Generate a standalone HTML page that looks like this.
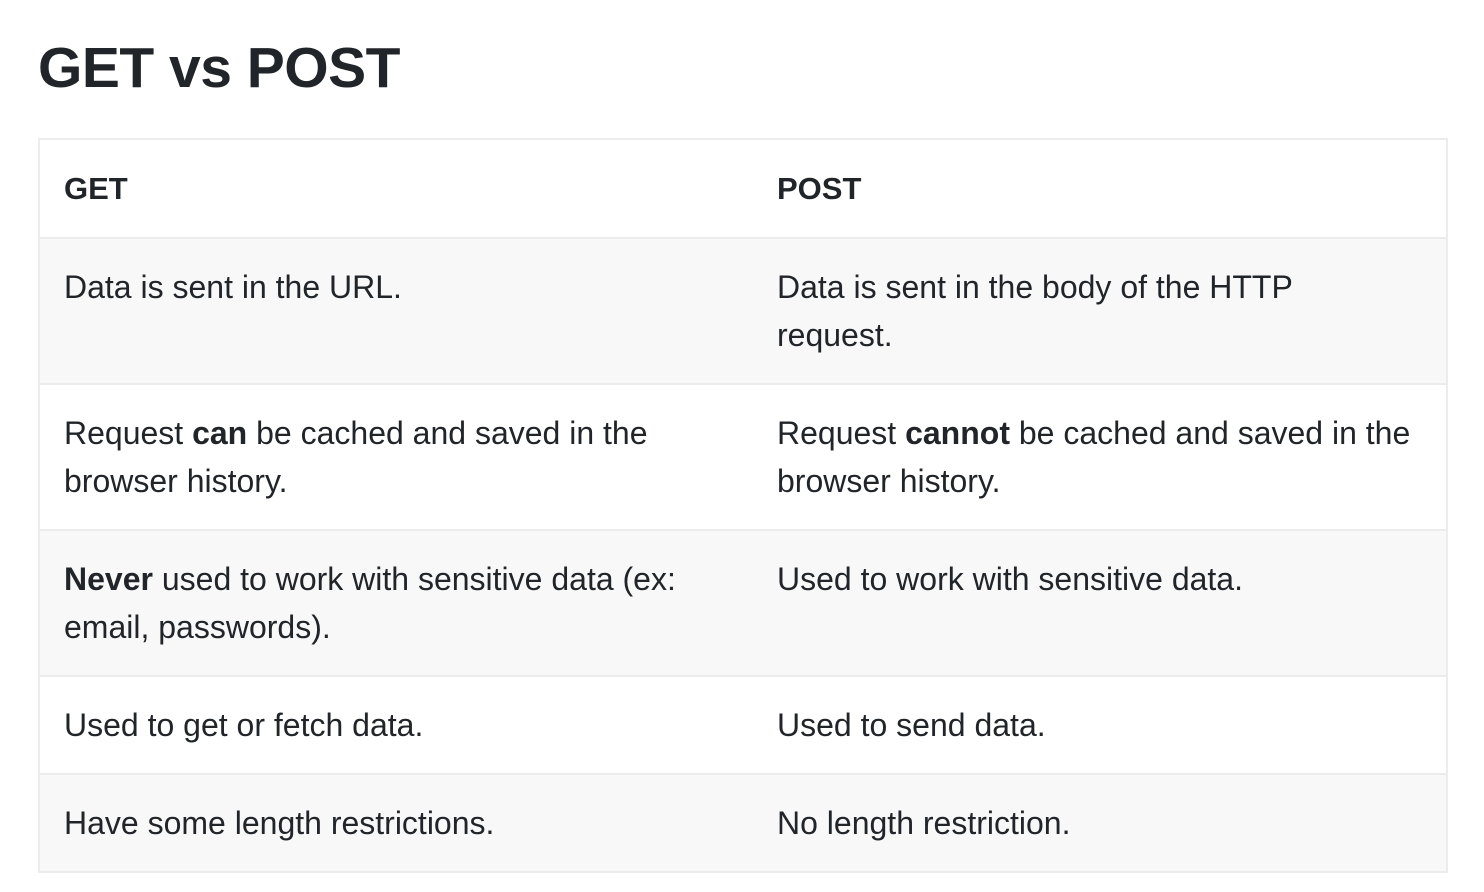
<!DOCTYPE html>
<html><head><meta charset="utf-8"><style>
html,body{margin:0;padding:0;background:#fff;width:1484px;height:892px;overflow:hidden}
body{font-family:"Liberation Sans",Arial,sans-serif;color:#212529}
h1{position:absolute;left:38px;top:28px;margin:0;font-size:57px;font-weight:bold;line-height:80px;letter-spacing:-0.5px}
table{position:absolute;left:38px;top:138px;width:1410px;border-collapse:collapse;font-size:32px;line-height:48px;border:2px solid #ececec;table-layout:fixed}
td,th{border-top:2px solid #ececec;border-bottom:2px solid #ececec;padding:0 24px;text-align:left;vertical-align:top}
td:first-child,th:first-child{padding-left:24px}
td+td,th+th{padding-left:0}
th{height:97px;vertical-align:middle;font-weight:bold;font-size:31px}
td{padding-top:24px;padding-bottom:24px}
tr.g td{background:#f8f8f8}
</style></head><body>
<h1>GET vs POST</h1>
<table>
<colgroup><col style="width:738px"><col></colgroup>
<tr><th>GET</th><th>POST</th></tr>
<tr class="g"><td style="height:96px">Data is sent in the URL.</td><td>Data is sent in the body of the HTTP<br>request.</td></tr>
<tr><td style="height:96px">Request <b>can</b> be cached and saved in the browser history.</td><td>Request <b>cannot</b> be cached and saved in the browser history.</td></tr>
<tr class="g"><td style="height:96px"><b>Never</b> used to work with sensitive data (ex: email, passwords).</td><td>Used to work with sensitive data.</td></tr>
<tr><td style="height:48px">Used to get or fetch data.</td><td>Used to send data.</td></tr>
<tr class="g"><td style="height:48px">Have some length restrictions.</td><td>No length restriction.</td></tr>
</table>
</body></html>
